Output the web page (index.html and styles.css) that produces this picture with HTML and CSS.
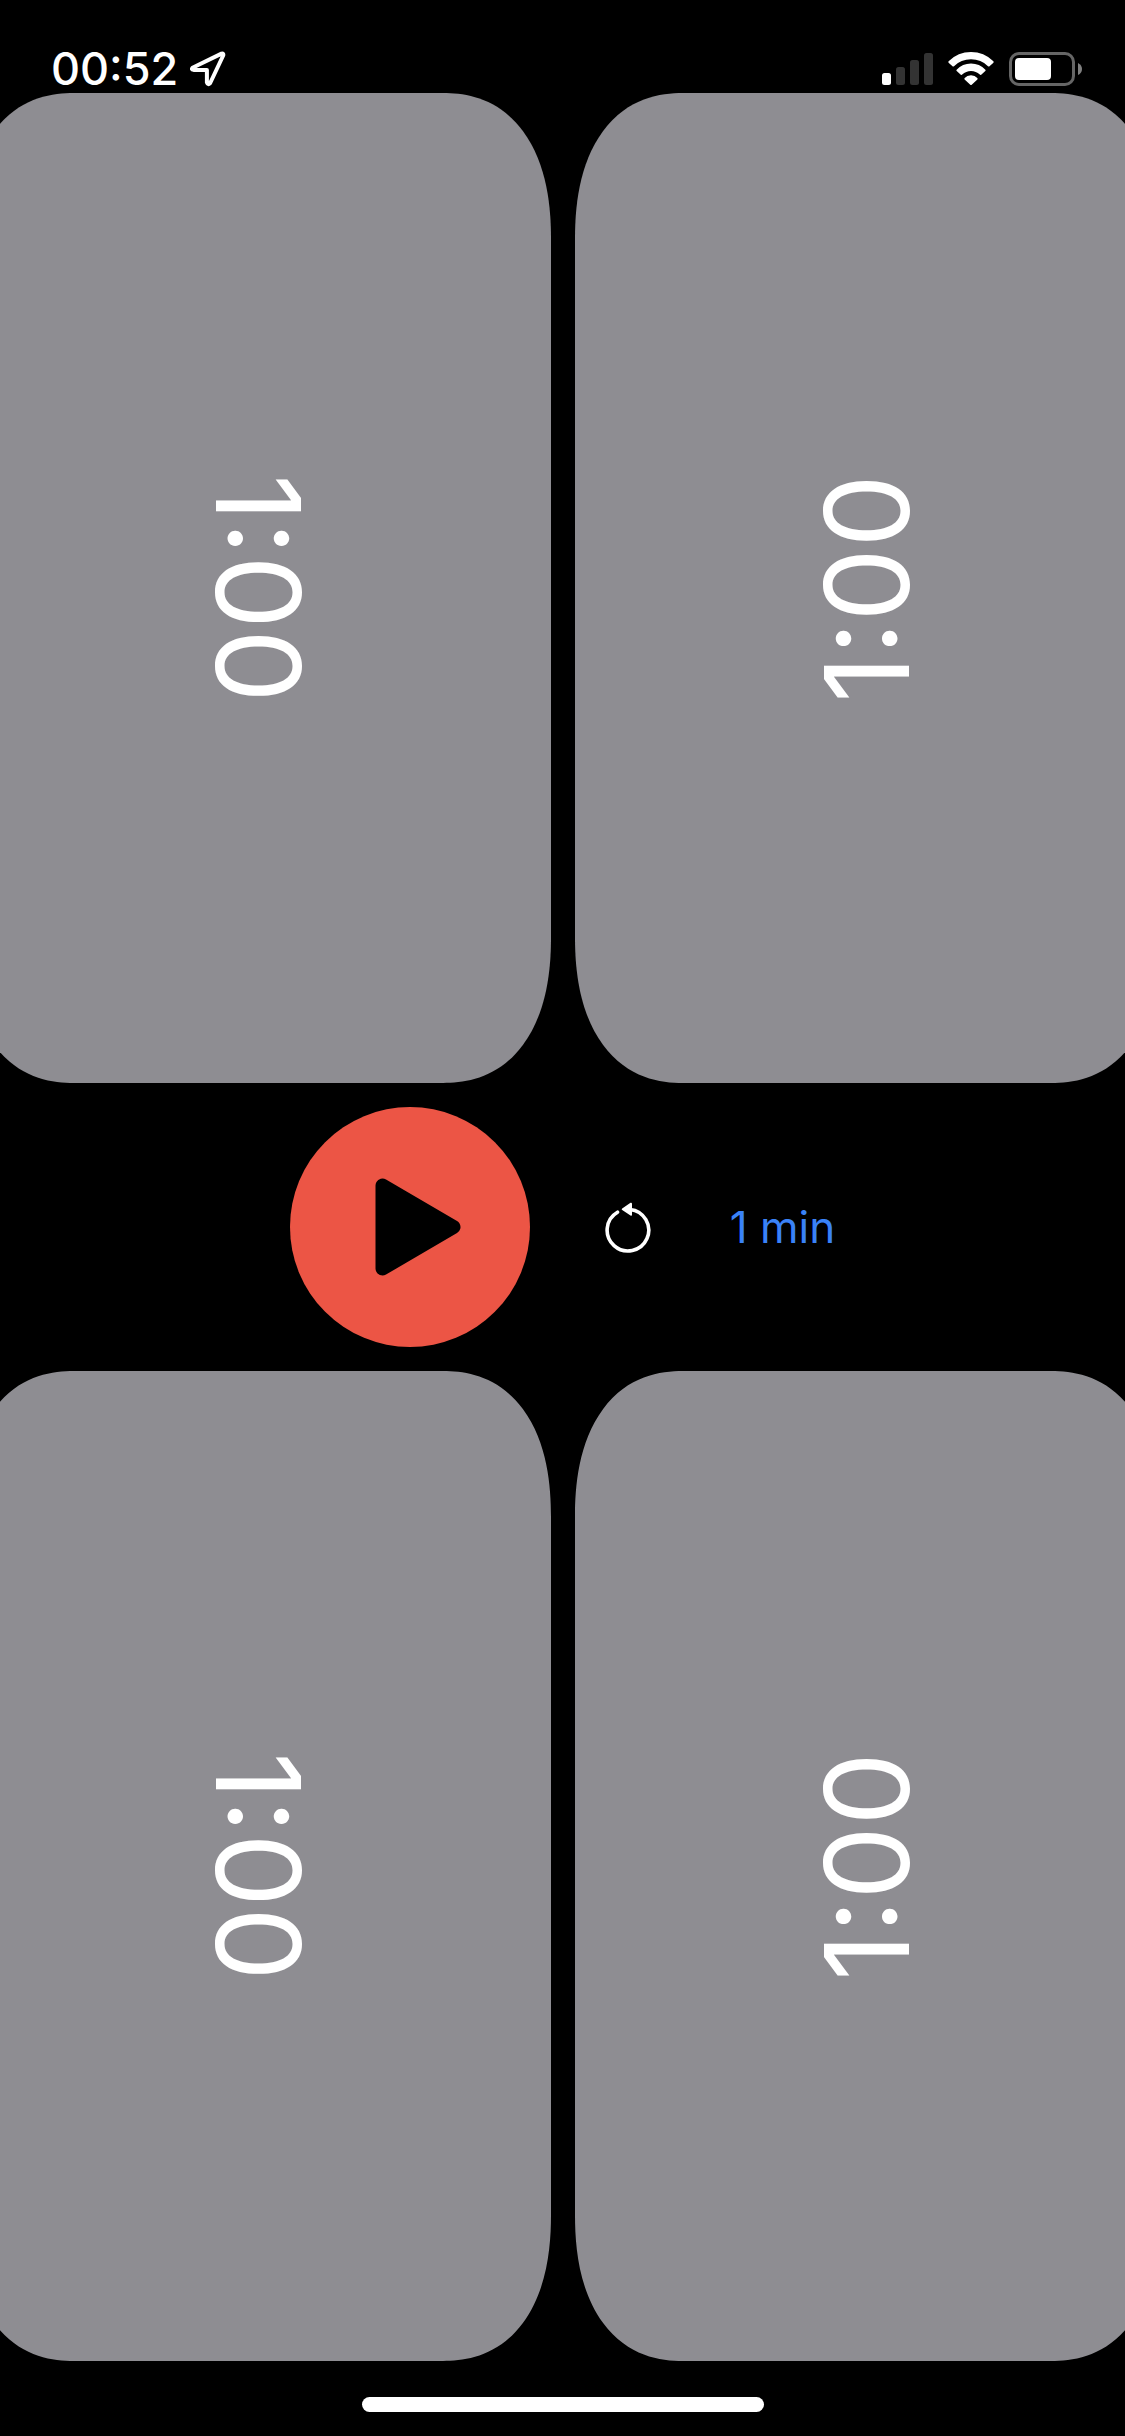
FILE: index.html
```html
<!DOCTYPE html>
<html lang="en">
<head>
<meta charset="utf-8">
<meta name="viewport" content="width=device-width, initial-scale=1">
<title>Timers</title>
<link rel="stylesheet" href="styles.css">
</head>
<body>
<div class="screen">
  <header class="status">
    <div class="status-group status-left">
      <span class="clock">00:52</span>
      <svg class="icon" width="36" height="36" viewBox="0 0 36 36" aria-hidden="true"><path d="M2.5 16.7 31.5 2.6Q33.8 2 33.2 4.5L20.2 32Q17.8 34.5 16.9 31.5V18.9H3.5Q1 18.5 2.5 16.7Z" fill="none" stroke="#fff" stroke-width="4" stroke-linejoin="round"/></svg>
    </div>
    <div class="status-group">
      <svg class="icon" width="51" height="34" viewBox="0 0 51 34" aria-hidden="true">
        <rect x="0" y="21" width="9" height="12" rx="2.5" fill="#fff"/>
        <g fill="#333"><rect x="14" y="15" width="9" height="18" rx="2.5"/><rect x="28" y="8" width="9" height="25" rx="2.5"/><rect x="42" y="1" width="9" height="32" rx="2.5"/></g>
      </svg>
      <svg class="icon" width="46" height="34" viewBox="0 0 46 34" aria-hidden="true">
        <g fill="#fff">
          <path d="M.6 9.2Q10 0 23 0T45.400 9.200Q46 10 45.400 10.700L41.500 14.300Q40.800 14.700 40 14.200 33 7.300 23 7.300T6 14.200Q5.200 14.700 4.500 14.300L.6 10.700Q0 10 .6 9.200Z"/>
          <path d="M8.600 17.700Q14.500 11.600 23 11.600T37.400 17.700Q38 18.400 37.300 19.100L33.200 22.700Q32.500 23.200 31.800 22.600 28 18.900 23 18.900T14.200 22.600Q13.500 23.200 12.800 22.700L8.700 19.100Q8 18.400 8.600 17.700Z"/>
          <path d="M16.700 26Q19 23.300 23 23.300T29.300 26Q30 26.700 29.400 27.400L23.700 32.700Q23 33.300 22.300 32.700L16.600 27.400Q16 26.700 16.700 26Z"/>
        </g>
      </svg>
      <svg class="icon" width="73" height="34" viewBox="0 0 73 34" aria-hidden="true">
        <rect x="1.500" y="1.500" width="63" height="31" rx="8.500" fill="none" stroke="#666" stroke-width="3"/>
        <rect x="6" y="6" width="36" height="22" rx="4" fill="#fff"/>
        <path d="M69 11Q73 13 73 17T69 23Z" fill="#808080"/>
      </svg>
    </div>
  </header>
  <main class="board">
    <section class="pair">
      <button class="timer" type="button"><span class="time">1:00</span></button>
      <button class="timer" type="button"><span class="time time-flipped">1:00</span></button>
    </section>
    <section class="controls">
      <button class="play" type="button" aria-label="Start">
        <svg width="240" height="240" viewBox="0 0 240 240" aria-hidden="true"><path d="M92.500 78.500V161.500L163.500 120Z" fill="#000" stroke="#000" stroke-width="14" stroke-linejoin="round"/></svg>
      </button>
      <button class="reset" type="button" aria-label="Reset">
        <svg width="56" height="54" viewBox="0 0 56 54" aria-hidden="true"><path d="M15.500 12.200A20.800 20.800 0 1 0 28 9.500" fill="none" stroke="#fff" stroke-width="3.600" stroke-linecap="round"/><path d="M20.200 8.600 28.500 2.800Q30 2.200 30 4V14.500Q30 16.300 28.500 15.500L20.200 10Q19 9.300 20.200 8.600Z" fill="#fff"/></svg>
      </button>
      <button class="duration" type="button">1 min</button>
    </section>
    <section class="pair">
      <button class="timer" type="button"><span class="time">1:00</span></button>
      <button class="timer" type="button"><span class="time time-flipped">1:00</span></button>
    </section>
  </main>
  <footer class="home"><div class="home-bar"></div></footer>
</div>
</body>
</html>
```
FILE: styles.css
```css
* { box-sizing: border-box; }
body {
  margin: 0;
  background: #000;
  color: #fff;
  font-family: Inter, "Liberation Sans", sans-serif;
}
button {
  margin: 0;
  padding: 0;
  border: 0;
  background: none;
  color: inherit;
  font: inherit;
  cursor: pointer;
}
svg { display: block; }
.screen {
  display: flex;
  flex-direction: column;
  min-height: 100vh;
  overflow: hidden;
}
.status {
  display: flex;
  justify-content: space-between;
  padding: 45px 43px 0 51px;
}
.status-group {
  display: flex;
  align-items: center;
  gap: 15px;
  height: 48px;
}
.status-left { gap: 12px; }
.clock {
  font-size: 45px;
  line-height: 48px;
  font-weight: 550;
}
.board {
  flex: 1;
  display: flex;
  flex-direction: column;
  gap: 24px;
}
.pair {
  flex: 1;
  display: flex;
  gap: 24px;
  margin: 0 -34px;
}
.timer {
  flex: 1;
  display: flex;
  align-items: center;
  justify-content: center;
  border-radius: 96px / 128px;
  background: #8e8d92;
}
/* Smoother corners where the browser can draw them */
@supports (corner-shape: superellipse(1.2)) {
  .timer {
    border-radius: 108px / 146px;
    corner-shape: superellipse(1.2);
  }
}
.time {
  writing-mode: vertical-rl;
  font-size: 117px;
  line-height: 140px;
}
.time-flipped { transform: rotate(180deg); }
.controls {
  display: flex;
  align-items: center;
  justify-content: center;
  gap: 72px;
}
.play {
  border-radius: 50%;
  background: #ec5545;
}
.duration {
  color: #3a82f7;
  font-size: 44px;
  line-height: 56px;
}
.home {
  display: flex;
  justify-content: center;
  padding: 36px 0 24px;
}
.home-bar {
  width: 402px;
  height: 15px;
  border-radius: 8px;
  background: #fff;
}
```
